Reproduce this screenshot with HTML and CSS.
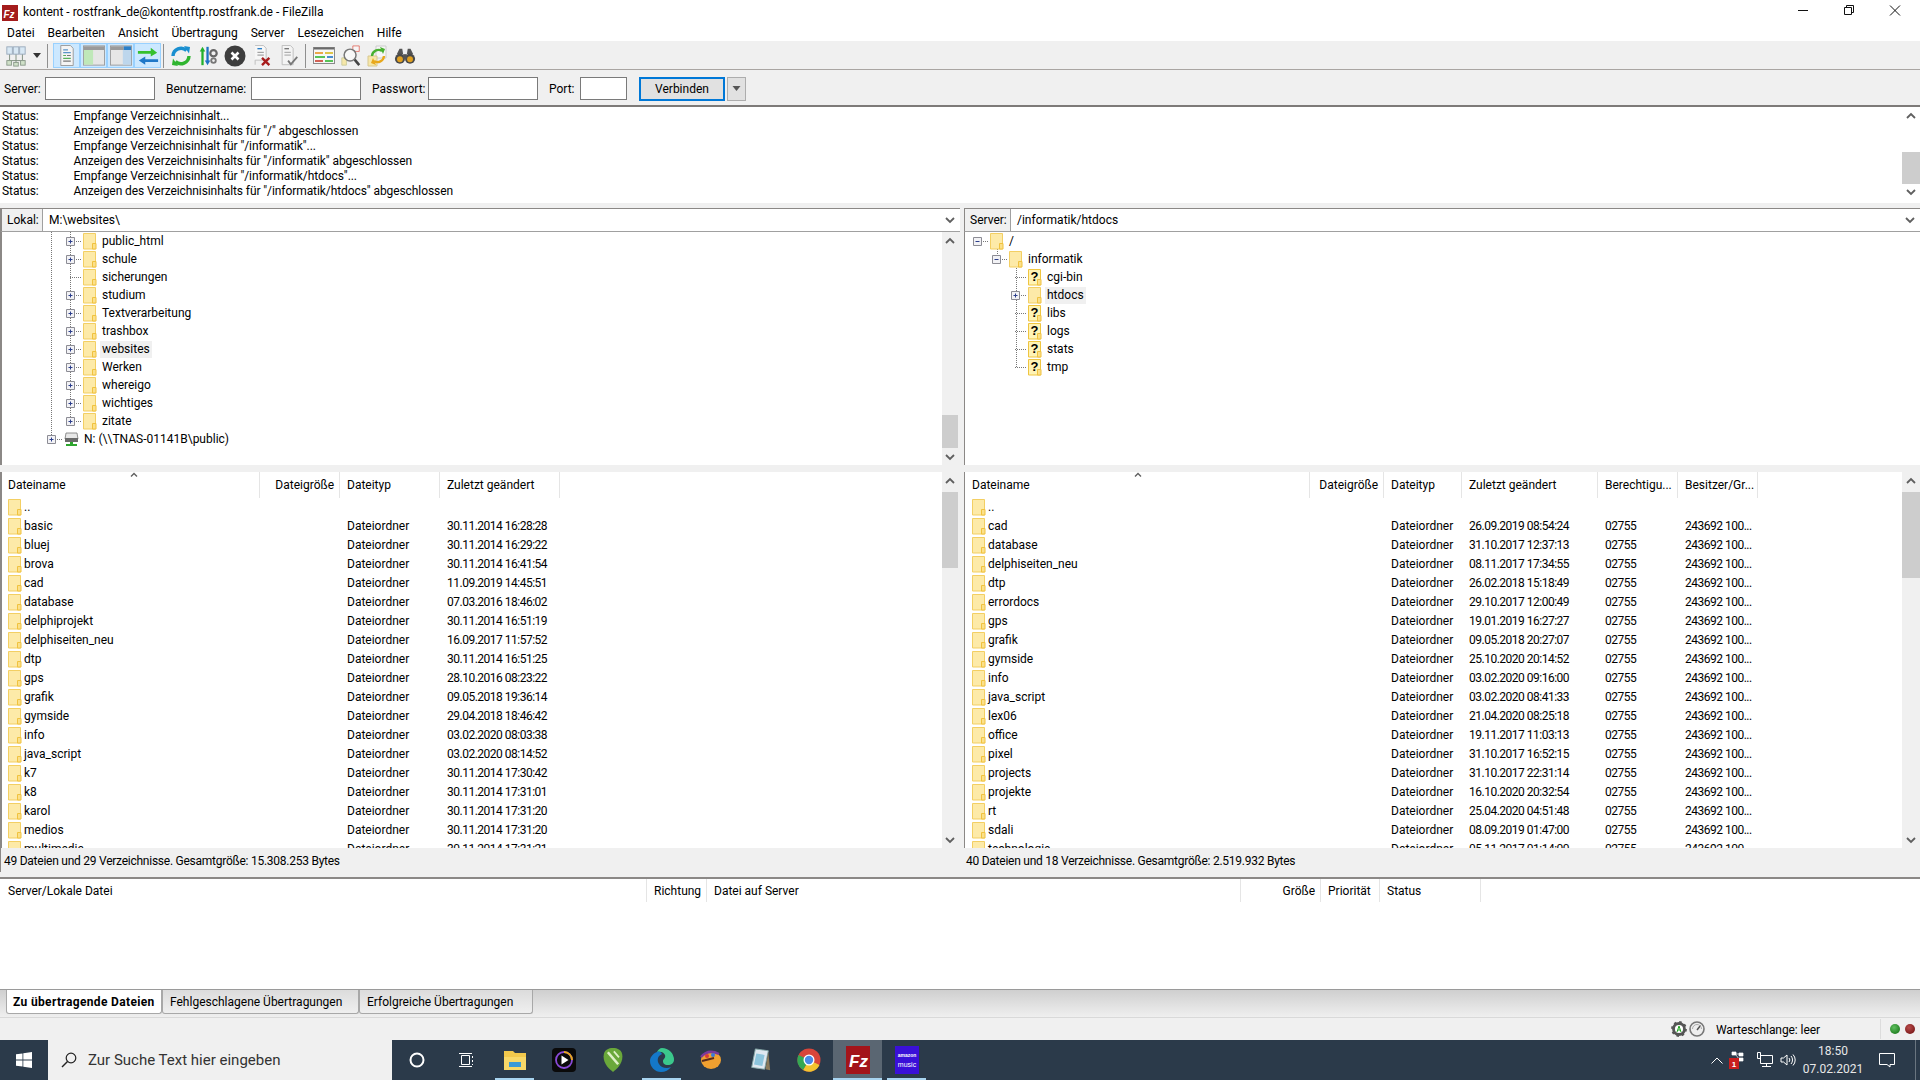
FILE: index.html
```html
<!DOCTYPE html>
<html lang="de">
<head>
<meta charset="utf-8">
<title>FileZilla</title>
<link rel="stylesheet" href="styles.css">
</head>
<body>
<svg class="sprite" width="0" height="0">
  <symbol id="folder" viewBox="0 0 14 17"><path d="M.5.5h12v15.500H.5z" fill="#fdeaa8" stroke="#f3cf63"/><path d="M9.500 16V10.500H13V16z" fill="#fbe08a" stroke="#f0c23f"/></symbol>
  <symbol id="qfolder" viewBox="0 0 14 17"><path d="M.5.5h12v15.500H.5z" fill="#fff3b5" stroke="#efc540"/><path d="M9.500 16V10.500H13V16z" fill="#fbe08a" stroke="#f0c23f"/></symbol>
  <symbol id="exp-plus" viewBox="0 0 17 18"><path d="M.5 5.500h8v8h-8z" fill="#f2f2f5" stroke="#8c8c94"/><path d="M2.500 9.500h4M4.500 7.500v4" stroke="#2c3f8c"/><path d="M10 9.500h6" stroke="#777" stroke-dasharray="1 1"/></symbol>
  <symbol id="exp-minus" viewBox="0 0 17 18"><path d="M.5 5.500h8v8h-8z" fill="#f2f2f5" stroke="#8c8c94"/><path d="M2.500 9.500h4" stroke="#2c3f8c"/><path d="M10 9.500h6" stroke="#777" stroke-dasharray="1 1"/></symbol>
  <symbol id="exp-none" viewBox="0 0 17 18"><path d="M4 9.500h12" stroke="#777" stroke-dasharray="1 1"/></symbol>
  <symbol id="up" viewBox="0 0 10 8"><path d="M1 6l4-4 4 4" fill="none" stroke="#5f5f5f" stroke-width="1.800"/></symbol>
  <symbol id="down" viewBox="0 0 10 8"><path d="M1 2l4 4 4-4" fill="none" stroke="#5f5f5f" stroke-width="1.800"/></symbol>
</svg>

<div class="window">
  <header class="titlebar">
    <div class="title-left">
      <svg class="app-icon" viewBox="0 0 16 16"><rect width="16" height="16" fill="#a41c1c"/><text x="1.500" y="12.500" class="fz-small">Fz</text></svg>
      <span>kontent - rostfrank_de@kontentftp.rostfrank.de - FileZilla</span>
    </div>
    <div class="winbtns">
      <svg class="winbtn" viewBox="0 0 46 20"><path d="M18 10.500h10" stroke="#111"/></svg>
      <svg class="winbtn" viewBox="0 0 46 20"><path d="M18.500 7.500h7v7h-7zM20.500 7.500v-2h7v7h-2" fill="none" stroke="#111"/></svg>
      <svg class="winbtn" viewBox="0 0 46 20"><path d="M18 5.500l10 10M28 5.500l-10 10" stroke="#111"/></svg>
    </div>
  </header>

  <nav class="menubar">
    <span>Datei</span><span>Bearbeiten</span><span>Ansicht</span><span>Übertragung</span><span>Server</span><span>Lesezeichen</span><span>Hilfe</span>
  </nav>

  <div class="toolbar">
    <svg class="tb tb-site" viewBox="0 0 22 24"><path d="M4 9v8M11 9v8M18 9v8M2 17h18M11 17v3" stroke="#7a8a7a" fill="none"/><rect x="1" y="2" width="6" height="8" fill="#d8e8f4" stroke="#9ab"/><rect x="8" y="2" width="6" height="8" fill="#d8e8f4" stroke="#9ab"/><rect x="15" y="2" width="6" height="8" fill="#d8e8f4" stroke="#9ab"/><rect x="1" y="17" width="5" height="5" fill="#cfe0c8" stroke="#8a9a8a"/><rect x="8.500" y="19" width="5" height="4" fill="#cfe0c8" stroke="#8a9a8a"/><rect x="16" y="17" width="5" height="5" fill="#cfe0c8" stroke="#8a9a8a"/></svg>
    <svg class="tb-caret" viewBox="0 0 8 5"><path d="M0 0h8L4 5z" fill="#333"/></svg>
    <i class="tb-sep"></i>
    <div class="tb-group">
      <div class="tb-on"><svg viewBox="0 0 20 22"><path d="M3.500.5h10l3 3v18h-13z" fill="#f4f4f4" stroke="#9a9a9a"/><path d="M6 5h5M6 8h8" stroke="#5a94c8" stroke-width="1.300"/><path d="M6 11h3M6 14h8" stroke="#56b05a" stroke-width="1.300"/><path d="M10 11h4M6 17h8" stroke="#777" stroke-width="1.300"/></svg></div>
      <div class="tb-on"><svg viewBox="0 0 24 22"><rect x=".5" y=".5" width="23" height="21" fill="#e6e6e6" stroke="#9a9a9a"/><rect x="1" y="1" width="22" height="4" fill="#9a9a9a"/><rect x="1" y="5" width="10" height="16" fill="#bfe8b9"/></svg></div>
      <div class="tb-on"><svg viewBox="0 0 24 22"><rect x=".5" y=".5" width="23" height="21" fill="#e6e6e6" stroke="#9a9a9a"/><rect x="1" y="1" width="14" height="4" fill="#9a9a9a"/><rect x="15" y="1" width="8" height="4" fill="#2a7fc8"/><rect x="14" y="5" width="9" height="16" fill="#bdd6ec"/></svg></div>
      <div class="tb-on"><svg viewBox="0 0 24 22"><path d="M1 6h14V2.500L22 8l-7 4V9H1z" fill="#35c02e"/><path d="M23 15H9v-3L2 16.500 9 21v-3h14z" fill="#1f78c8"/></svg></div>
    </div>
    <i class="tb-sep tb-sep-b"></i>
    <svg class="tb" viewBox="0 0 22 22"><path d="M3 11a8 8 0 0 1 13.500-5.500" fill="none" stroke="#1a8fd0" stroke-width="3.400"/><path d="M14 1l6 1-1 6.500z" fill="#1a8fd0"/><path d="M19 11a8 8 0 0 1-13.500 5.500" fill="none" stroke="#2fb52f" stroke-width="3.400"/><path d="M8 21l-6-1 1-6.500z" fill="#2fb52f"/></svg>
    <svg class="tb" viewBox="0 0 22 24"><path d="M5 22V6" stroke="#22b02a" stroke-width="2.500"/><path d="M2 7l3-5 3 5z" fill="#22b02a"/><path d="M10.500 2v16" stroke="#1c72c4" stroke-width="2.500"/><path d="M7.500 17l3 5 3-5z" fill="#1c72c4"/><circle cx="17" cy="9" r="3.500" fill="none" stroke="#666" stroke-width="2.400"/><circle cx="17" cy="17" r="2.500" fill="none" stroke="#777" stroke-width="2"/></svg>
    <svg class="tb" viewBox="0 0 22 22"><circle cx="11" cy="11" r="10.500" fill="#3d3d3d"/><path d="M7.500 7.500l7 7M14.500 7.500l-7 7" stroke="#fff" stroke-width="2.600"/></svg>
    <svg class="tb" viewBox="0 0 22 24"><path d="M3.500.5h9l3 3v13h-12v5" fill="#f7f7f7" stroke="#bbb"/><path d="M6 4h5" stroke="#2a7fc8" stroke-width="1.500"/><path d="M6 8h7M6 11h7" stroke="#888"/><path d="M11 14l8 8M19 14l-8 8" stroke="#a81c1c" stroke-width="2.600"/></svg>
    <svg class="tb" viewBox="0 0 22 24"><path d="M3.500.5h9l3 3v18h-12z" fill="#f4f4f4" stroke="#bbb"/><path d="M6 4h5" stroke="#777" stroke-width="1.500"/><path d="M6 8h7M6 11h7" stroke="#999"/><path d="M10 17l3 4 7-8" fill="none" stroke="#777" stroke-width="2"/></svg>
    <i class="tb-sep tb-sep-c"></i>
    <svg class="tb" viewBox="0 0 22 20"><rect x=".5" y="1.500" width="21" height="16" fill="#f7f7f7" stroke="#8a8a8a"/><path d="M1 2.500h20" stroke="#6a6a6a" stroke-width="2"/><path d="M2 7h8" stroke="#e8921c" stroke-width="1.600"/><path d="M12 7h8" stroke="#d8b81c" stroke-width="1.600"/><path d="M2 11h10" stroke="#2fb52f" stroke-width="1.600"/><path d="M14 11h6" stroke="#1c72c4" stroke-width="1.600"/><path d="M2 15h8" stroke="#c83a2a" stroke-width="1.600"/><path d="M12 15h8" stroke="#2fb52f" stroke-width="1.600"/></svg>
    <svg class="tb" viewBox="0 0 22 24"><path d="M13 1h7v6h-7z" fill="#f6f6f6" stroke="#d43" stroke-width=".7"/><path d="M1 14h5v8H1z" fill="#f6e7a8" stroke="#cc9"/><circle cx="10" cy="11" r="6.500" fill="#f8f8f8" stroke="#777" stroke-width="1.600"/><path d="M15 16l5 6" stroke="#444" stroke-width="2.800"/></svg>
    <svg class="tb" viewBox="0 0 22 22"><path d="M9 1h10v12H9z" fill="#f6f6f6" stroke="#ccc"/><path d="M1 11h9v10H1z" fill="#f6e7a8" stroke="#d8c890"/><path d="M5 11a6.500 6.500 0 0 1 10-5" fill="none" stroke="#48b030" stroke-width="2.400"/><path d="M13 2l5 2-2 5z" fill="#48b030"/><path d="M17 11a6.500 6.500 0 0 1-10 5" fill="none" stroke="#e8a81c" stroke-width="2.400"/><path d="M9 20l-5-2 2-5z" fill="#e8a81c"/></svg>
    <svg class="tb" viewBox="0 0 24 20"><path d="M3 8l3-6h3l1 6zM21 8l-3-6h-3l-1 6z" fill="#555"/><circle cx="6.500" cy="13" r="5.500" fill="#4a4a4a"/><circle cx="17.500" cy="13" r="5.500" fill="#4a4a4a"/><circle cx="6.500" cy="13.500" r="3.200" fill="#e0a020"/><circle cx="17.500" cy="13.500" r="3.200" fill="#e0a020"/><rect x="10" y="8" width="4" height="5" fill="#555"/></svg>
  </div>

  <form class="quick">
    <label class="q-server">Server:</label><span class="field f-wide"></span>
    <label class="q-user">Benutzername:</label><span class="field f-wide"></span>
    <label class="q-pass">Passwort:</label><span class="field f-wide"></span>
    <label class="q-port">Port:</label><span class="field f-port"></span>
    <span class="connect">Verbinden</span>
    <span class="connect-more"><svg viewBox="0 0 8 5"><path d="M0 0h8L4 5z" fill="#555"/></svg></span>
  </form>

  <section class="log">
    <div class="log-body">
      <div class="log-row"><span>Status:</span><span>Empfange Verzeichnisinhalt...</span></div>
      <div class="log-row"><span>Status:</span><span>Anzeigen des Verzeichnisinhalts für "/" abgeschlossen</span></div>
      <div class="log-row"><span>Status:</span><span>Empfange Verzeichnisinhalt für "/informatik"...</span></div>
      <div class="log-row"><span>Status:</span><span>Anzeigen des Verzeichnisinhalts für "/informatik" abgeschlossen</span></div>
      <div class="log-row"><span>Status:</span><span>Empfange Verzeichnisinhalt für "/informatik/htdocs"...</span></div>
      <div class="log-row"><span>Status:</span><span>Anzeigen des Verzeichnisinhalts für "/informatik/htdocs" abgeschlossen</span></div>
    </div>
    <div class="sb sb-r sb-log"><svg class="sb-a"><use href="#up"/></svg><i class="thumb"></i><svg class="sb-a"><use href="#down"/></svg></div>
  </section>

  <div class="split">
    <section class="pane pane-l">
      <div class="pathbar"><span class="path-label">Lokal:</span><span class="path-value">M:\websites\</span><svg class="path-chev"><use href="#down"/></svg></div>
      <div class="tree-wrap">
        <div class="tree">
          <i class="vl vl-a"></i><i class="vl vl-b"></i>
          <div class="node ind-local"><svg class="exp"><use href="#exp-plus"/></svg><svg class="fld"><use href="#folder"/></svg><span class="lbl">public_html</span></div>
          <div class="node ind-local"><svg class="exp"><use href="#exp-plus"/></svg><svg class="fld"><use href="#folder"/></svg><span class="lbl">schule</span></div>
          <div class="node ind-local"><svg class="exp"><use href="#exp-none"/></svg><svg class="fld"><use href="#folder"/></svg><span class="lbl">sicherungen</span></div>
          <div class="node ind-local"><svg class="exp"><use href="#exp-plus"/></svg><svg class="fld"><use href="#folder"/></svg><span class="lbl">studium</span></div>
          <div class="node ind-local"><svg class="exp"><use href="#exp-plus"/></svg><svg class="fld"><use href="#folder"/></svg><span class="lbl">Textverarbeitung</span></div>
          <div class="node ind-local"><svg class="exp"><use href="#exp-plus"/></svg><svg class="fld"><use href="#folder"/></svg><span class="lbl">trashbox</span></div>
          <div class="node ind-local"><svg class="exp"><use href="#exp-plus"/></svg><svg class="fld"><use href="#folder"/></svg><span class="lbl sel">websites</span></div>
          <div class="node ind-local"><svg class="exp"><use href="#exp-plus"/></svg><svg class="fld"><use href="#folder"/></svg><span class="lbl">Werken</span></div>
          <div class="node ind-local"><svg class="exp"><use href="#exp-plus"/></svg><svg class="fld"><use href="#folder"/></svg><span class="lbl">whereigo</span></div>
          <div class="node ind-local"><svg class="exp"><use href="#exp-plus"/></svg><svg class="fld"><use href="#folder"/></svg><span class="lbl">wichtiges</span></div>
          <div class="node ind-local"><svg class="exp"><use href="#exp-plus"/></svg><svg class="fld"><use href="#folder"/></svg><span class="lbl">zitate</span></div>
          <div class="node ind-drive"><svg class="exp"><use href="#exp-plus"/></svg><svg class="drive" viewBox="0 0 15 15"><path d="M2 1h11l1 6H1z" fill="#e8e8e8" stroke="#777" stroke-width=".8"/><rect x="1" y="6" width="13" height="4" fill="#6a6a6a"/><path d="M6 10h3v2H6zM2 12h11v2H2z" fill="#2da52d"/></svg><span class="lbl-drive">N: (\\TNAS-01141B\public)</span></div>
        </div>
        <div class="sb sb-l"><svg class="sb-a"><use href="#up"/></svg><i class="thumb thumb-tree"></i><svg class="sb-a"><use href="#down"/></svg></div>
      </div>
      <div class="pane-gap"></div>
      <div class="list-wrap">
        <div class="list cols-l">
          <svg class="sortmark sort-l"><use href="#up"/></svg>
          <div class="row head"><span>Dateiname</span><span class="r">Dateigröße</span><span>Dateityp</span><span>Zuletzt geändert</span></div>
          <div class="row"><span class="n"><svg class="fld"><use href="#folder"/></svg>..</span><span></span><span></span><span></span></div>
          <div class="row"><span class="n"><svg class="fld"><use href="#folder"/></svg>basic</span><span></span><span>Dateiordner</span><span>30.11.2014 16:28:28</span></div>
          <div class="row"><span class="n"><svg class="fld"><use href="#folder"/></svg>bluej</span><span></span><span>Dateiordner</span><span>30.11.2014 16:29:22</span></div>
          <div class="row"><span class="n"><svg class="fld"><use href="#folder"/></svg>brova</span><span></span><span>Dateiordner</span><span>30.11.2014 16:41:54</span></div>
          <div class="row"><span class="n"><svg class="fld"><use href="#folder"/></svg>cad</span><span></span><span>Dateiordner</span><span>11.09.2019 14:45:51</span></div>
          <div class="row"><span class="n"><svg class="fld"><use href="#folder"/></svg>database</span><span></span><span>Dateiordner</span><span>07.03.2016 18:46:02</span></div>
          <div class="row"><span class="n"><svg class="fld"><use href="#folder"/></svg>delphiprojekt</span><span></span><span>Dateiordner</span><span>30.11.2014 16:51:19</span></div>
          <div class="row"><span class="n"><svg class="fld"><use href="#folder"/></svg>delphiseiten_neu</span><span></span><span>Dateiordner</span><span>16.09.2017 11:57:52</span></div>
          <div class="row"><span class="n"><svg class="fld"><use href="#folder"/></svg>dtp</span><span></span><span>Dateiordner</span><span>30.11.2014 16:51:25</span></div>
          <div class="row"><span class="n"><svg class="fld"><use href="#folder"/></svg>gps</span><span></span><span>Dateiordner</span><span>28.10.2016 08:23:22</span></div>
          <div class="row"><span class="n"><svg class="fld"><use href="#folder"/></svg>grafik</span><span></span><span>Dateiordner</span><span>09.05.2018 19:36:14</span></div>
          <div class="row"><span class="n"><svg class="fld"><use href="#folder"/></svg>gymside</span><span></span><span>Dateiordner</span><span>29.04.2018 18:46:42</span></div>
          <div class="row"><span class="n"><svg class="fld"><use href="#folder"/></svg>info</span><span></span><span>Dateiordner</span><span>03.02.2020 08:03:38</span></div>
          <div class="row"><span class="n"><svg class="fld"><use href="#folder"/></svg>java_script</span><span></span><span>Dateiordner</span><span>03.02.2020 08:14:52</span></div>
          <div class="row"><span class="n"><svg class="fld"><use href="#folder"/></svg>k7</span><span></span><span>Dateiordner</span><span>30.11.2014 17:30:42</span></div>
          <div class="row"><span class="n"><svg class="fld"><use href="#folder"/></svg>k8</span><span></span><span>Dateiordner</span><span>30.11.2014 17:31:01</span></div>
          <div class="row"><span class="n"><svg class="fld"><use href="#folder"/></svg>karol</span><span></span><span>Dateiordner</span><span>30.11.2014 17:31:20</span></div>
          <div class="row"><span class="n"><svg class="fld"><use href="#folder"/></svg>medios</span><span></span><span>Dateiordner</span><span>30.11.2014 17:31:20</span></div>
          <div class="row"><span class="n"><svg class="fld"><use href="#folder"/></svg>multimedia</span><span></span><span>Dateiordner</span><span>30.11.2014 17:31:21</span></div>
        </div>
        <div class="sb sb-l"><svg class="sb-a"><use href="#up"/></svg><i class="thumb thumb-ll"></i><svg class="sb-a"><use href="#down"/></svg></div>
      </div>
      <div class="statusline">49 Dateien und 29 Verzeichnisse. Gesamtgröße: 15.308.253 Bytes</div>
    </section>

    <section class="pane pane-r">
      <div class="pathbar"><span class="path-label">Server:</span><span class="path-value">/informatik/htdocs</span><svg class="path-chev"><use href="#down"/></svg></div>
      <div class="tree-wrap">
        <div class="tree">
          <i class="vl vl-c"></i><i class="vl vl-d"></i>
          <div class="node ind-0"><svg class="exp"><use href="#exp-minus"/></svg><svg class="fld"><use href="#folder"/></svg><span class="lbl">/</span></div>
          <div class="node ind-1"><svg class="exp"><use href="#exp-minus"/></svg><svg class="fld"><use href="#folder"/></svg><span class="lbl">informatik</span></div>
          <div class="node ind-2"><svg class="exp"><use href="#exp-none"/></svg><span class="qf"><svg class="fld"><use href="#qfolder"/></svg><b class="qmark">?</b></span><span class="lbl">cgi-bin</span></div>
          <div class="node ind-2"><svg class="exp"><use href="#exp-plus"/></svg><svg class="fld"><use href="#folder"/></svg><span class="lbl sel">htdocs</span></div>
          <div class="node ind-2"><svg class="exp"><use href="#exp-none"/></svg><span class="qf"><svg class="fld"><use href="#qfolder"/></svg><b class="qmark">?</b></span><span class="lbl">libs</span></div>
          <div class="node ind-2"><svg class="exp"><use href="#exp-none"/></svg><span class="qf"><svg class="fld"><use href="#qfolder"/></svg><b class="qmark">?</b></span><span class="lbl">logs</span></div>
          <div class="node ind-2"><svg class="exp"><use href="#exp-none"/></svg><span class="qf"><svg class="fld"><use href="#qfolder"/></svg><b class="qmark">?</b></span><span class="lbl">stats</span></div>
          <div class="node ind-2"><svg class="exp"><use href="#exp-none"/></svg><span class="qf"><svg class="fld"><use href="#qfolder"/></svg><b class="qmark">?</b></span><span class="lbl">tmp</span></div>
        </div>
      </div>
      <div class="pane-gap"></div>
      <div class="list-wrap">
        <div class="list cols-r">
          <svg class="sortmark sort-r"><use href="#up"/></svg>
          <div class="row head"><span>Dateiname</span><span class="r">Dateigröße</span><span>Dateityp</span><span>Zuletzt geändert</span><span>Berechtigu...</span><span>Besitzer/Gr...</span></div>
          <div class="row"><span class="n"><svg class="fld"><use href="#folder"/></svg>..</span><span></span><span></span><span></span><span></span><span></span></div>
          <div class="row"><span class="n"><svg class="fld"><use href="#folder"/></svg>cad</span><span></span><span>Dateiordner</span><span>26.09.2019 08:54:24</span><span>02755</span><span>243692 100...</span></div>
          <div class="row"><span class="n"><svg class="fld"><use href="#folder"/></svg>database</span><span></span><span>Dateiordner</span><span>31.10.2017 12:37:13</span><span>02755</span><span>243692 100...</span></div>
          <div class="row"><span class="n"><svg class="fld"><use href="#folder"/></svg>delphiseiten_neu</span><span></span><span>Dateiordner</span><span>08.11.2017 17:34:55</span><span>02755</span><span>243692 100...</span></div>
          <div class="row"><span class="n"><svg class="fld"><use href="#folder"/></svg>dtp</span><span></span><span>Dateiordner</span><span>26.02.2018 15:18:49</span><span>02755</span><span>243692 100...</span></div>
          <div class="row"><span class="n"><svg class="fld"><use href="#folder"/></svg>errordocs</span><span></span><span>Dateiordner</span><span>29.10.2017 12:00:49</span><span>02755</span><span>243692 100...</span></div>
          <div class="row"><span class="n"><svg class="fld"><use href="#folder"/></svg>gps</span><span></span><span>Dateiordner</span><span>19.01.2019 16:27:27</span><span>02755</span><span>243692 100...</span></div>
          <div class="row"><span class="n"><svg class="fld"><use href="#folder"/></svg>grafik</span><span></span><span>Dateiordner</span><span>09.05.2018 20:27:07</span><span>02755</span><span>243692 100...</span></div>
          <div class="row"><span class="n"><svg class="fld"><use href="#folder"/></svg>gymside</span><span></span><span>Dateiordner</span><span>25.10.2020 20:14:52</span><span>02755</span><span>243692 100...</span></div>
          <div class="row"><span class="n"><svg class="fld"><use href="#folder"/></svg>info</span><span></span><span>Dateiordner</span><span>03.02.2020 09:16:00</span><span>02755</span><span>243692 100...</span></div>
          <div class="row"><span class="n"><svg class="fld"><use href="#folder"/></svg>java_script</span><span></span><span>Dateiordner</span><span>03.02.2020 08:41:33</span><span>02755</span><span>243692 100...</span></div>
          <div class="row"><span class="n"><svg class="fld"><use href="#folder"/></svg>lex06</span><span></span><span>Dateiordner</span><span>21.04.2020 08:25:18</span><span>02755</span><span>243692 100...</span></div>
          <div class="row"><span class="n"><svg class="fld"><use href="#folder"/></svg>office</span><span></span><span>Dateiordner</span><span>19.11.2017 11:03:13</span><span>02755</span><span>243692 100...</span></div>
          <div class="row"><span class="n"><svg class="fld"><use href="#folder"/></svg>pixel</span><span></span><span>Dateiordner</span><span>31.10.2017 16:52:15</span><span>02755</span><span>243692 100...</span></div>
          <div class="row"><span class="n"><svg class="fld"><use href="#folder"/></svg>projects</span><span></span><span>Dateiordner</span><span>31.10.2017 22:31:14</span><span>02755</span><span>243692 100...</span></div>
          <div class="row"><span class="n"><svg class="fld"><use href="#folder"/></svg>projekte</span><span></span><span>Dateiordner</span><span>16.10.2020 20:32:54</span><span>02755</span><span>243692 100...</span></div>
          <div class="row"><span class="n"><svg class="fld"><use href="#folder"/></svg>rt</span><span></span><span>Dateiordner</span><span>25.04.2020 04:51:48</span><span>02755</span><span>243692 100...</span></div>
          <div class="row"><span class="n"><svg class="fld"><use href="#folder"/></svg>sdali</span><span></span><span>Dateiordner</span><span>08.09.2019 01:47:00</span><span>02755</span><span>243692 100...</span></div>
          <div class="row"><span class="n"><svg class="fld"><use href="#folder"/></svg>technologie</span><span></span><span>Dateiordner</span><span>05.11.2017 01:14:00</span><span>02755</span><span>243692 100...</span></div>
        </div>
        <div class="sb sb-r"><svg class="sb-a"><use href="#up"/></svg><i class="thumb thumb-lr"></i><svg class="sb-a"><use href="#down"/></svg></div>
      </div>
      <div class="statusline">40 Dateien und 18 Verzeichnisse. Gesamtgröße: 2.519.932 Bytes</div>
    </section>
  </div>

  <section class="queue">
    <div class="row head cols-q"><span>Server/Lokale Datei</span><span>Richtung</span><span>Datei auf Server</span><span class="r">Größe</span><span>Priorität</span><span>Status</span></div>
  </section>

  <div class="tabs">
    <span class="tab tab-on">Zu übertragende Dateien</span>
    <span class="tab">Fehlgeschlagene Übertragungen</span>
    <span class="tab">Erfolgreiche Übertragungen</span>
  </div>

  <div class="bottom">
    <svg class="st-ic" viewBox="0 0 16 16"><circle cx="8" cy="8" r="5.500" fill="none" stroke="#555" stroke-width="2.800"/><circle cx="8" cy="8" r="7" fill="none" stroke="#555" stroke-width="1.800" stroke-dasharray="2.500 3"/><circle cx="8" cy="8" r="3.500" fill="#fff"/><path d="M8 5l-2 6M8 5l2 6M7 9h2" fill="none" stroke="#1fa81f"/></svg>
    <svg class="st-ic" viewBox="0 0 16 16"><circle cx="8" cy="8" r="7" fill="#eee" stroke="#777" stroke-width="1.600"/><path d="M8 9l3.500-4.500" stroke="#555" stroke-width="1.500"/><path d="M3.500 8a4.500 4.500 0 0 1 9 0" fill="none" stroke="#aaa"/></svg>
    <span class="q-state">Warteschlange: leer</span>
    <i class="bottom-sep"></i>
    <i class="led led-g"></i>
    <i class="led led-r"></i>
  </div>

  <footer class="taskbar">
    <div class="start"><svg viewBox="0 0 16 16"><path d="M0 2.300l6.500-.9v6.200H0zM7.300 1.300L16 0v7.600H7.300zM0 8.400h6.500v6.200L0 13.700zM7.300 8.400H16V16l-8.700-1.200z" fill="#fff"/></svg></div>
    <div class="search">
      <svg viewBox="0 0 16 16"><circle cx="10" cy="6" r="4.800" fill="none" stroke="#222" stroke-width="1.200"/><path d="M6.500 9.500L1 15" stroke="#222" stroke-width="1.400"/></svg>
      <span>Zur Suche Text hier eingeben</span>
    </div>
    <div class="tslot"><svg class="ti-16" viewBox="0 0 16 16"><circle cx="8" cy="8" r="6.500" fill="none" stroke="#fff" stroke-width="2"/></svg></div>
    <div class="tslot"><svg class="ti-16" viewBox="0 0 16 16"><path d="M3.500 3.500h8v9h-8zM1 1.500h13M1 14.500h13M14.500 4v2M14.500 8v2M14.500 12v1" fill="none" stroke="#fff"/></svg></div>
    <div class="tslot run"><svg class="ti-24" viewBox="0 0 24 22"><path d="M1 2h9l2 2h11v17H1z" fill="#f2c84c"/><rect x="1" y="8" width="22" height="13" fill="#f8d868"/><path d="M6 13h12v5H6z" fill="#3a9ad8"/></svg></div>
    <div class="tslot"><svg class="ti-24" viewBox="0 0 24 24"><rect width="24" height="24" rx="4" fill="#0a0a0a"/><circle cx="12" cy="12" r="8" fill="none" stroke="#8a4ad8" stroke-width="1.800"/><path d="M12 4a8 8 0 0 1 8 8" fill="none" stroke="#e8a81c" stroke-width="1.800"/><path d="M9.500 7.500l7 4.500-7 4.500z" fill="#fff"/></svg></div>
    <div class="tslot"><svg class="ti-24" viewBox="0 0 24 28"><path d="M12 0c5 0 11 2 11 10 0 9-7 15-11 18C8 25 1 19 1 10 1 2 7 0 12 0z" fill="#6aa83a"/><path d="M6 5l12 14" stroke="#dff0c8" stroke-width="3"/><path d="M13 4l6 7" stroke="#dff0c8" stroke-width="2"/></svg></div>
    <div class="tslot run"><svg class="ti-24" viewBox="0 0 24 24"><path d="M12 0a12 12 0 0 1 12 12c0 3-3 5-6 5-4 0-5-2-5-4s3-3 2-6c-1-3-5-4-8-3 1-2 3-4 5-4z" fill="#3bc88c"/><path d="M7 4C2 6 0 10 0 13c0 6 5 11 11 11 4 0 8-2 10-5-4 2-10 1-12-3-2-3-2-8 3-10-1-2-3-3-5-2z" fill="#1478c8"/></svg></div>
    <div class="tslot"><svg class="ti-24" viewBox="0 0 24 24"><ellipse cx="12" cy="12" rx="10" ry="9" fill="#f0a030"/><path d="M2 9c5-6 12-6 18-3" stroke="#7a3a9a" stroke-width="2.500" fill="none"/><circle cx="8" cy="8" r="2" fill="#d83a3a"/><circle cx="14" cy="7" r="2" fill="#3a7ad8"/><path d="M3 13l12-3" stroke="#5a2a1a" stroke-width="2"/></svg></div>
    <div class="tslot"><svg class="ti-24" viewBox="0 0 24 26"><path d="M7 1l14 2-4 20L3 21z" fill="#dfe8f0" stroke="#8aa"/><path d="M8 6l9 1.500-2.500 12L5.500 18z" fill="#8cc4dc"/><path d="M18 23l3-19 2 20z" fill="#8a7a5a"/></svg></div>
    <div class="tslot"><svg class="ti-24" viewBox="0 0 24 24"><circle cx="12" cy="12" r="11.500" fill="#d8453a"/><path d="M12 12L22.500 17A11.500 11.500 0 0 1 6 22z" fill="#f2c430"/><path d="M12 12L6 22A11.500 11.500 0 0 1 1.500 7z" fill="#34a853"/><circle cx="12" cy="12" r="5.500" fill="#fff"/><circle cx="12" cy="12" r="4.200" fill="#4a8ae8"/></svg></div>
    <div class="tslot run active"><svg class="ti-24 ti-tall" viewBox="0 0 24 28"><rect width="24" height="28" fill="#a3141a"/><text x="3" y="21" class="fz-big">Fz</text></svg></div>
    <div class="tslot run"><svg class="ti-24 ti-tall" viewBox="0 0 24 28"><rect width="24" height="28" fill="#3a10d8"/><text x="12" y="11" class="am1">amazon</text><text x="12" y="21" class="am2">music</text></svg></div>
    <div class="tray">
      <svg class="ty-chev" viewBox="0 0 12 7"><path d="M.5 6.500L6 1l5.500 5.500" fill="none" stroke="#fff"/></svg>
      <svg class="ty-badge" viewBox="0 0 16 18"><path d="M3 1h4v3H3zM10 2h4v3h-4zM10 7h4v3h-4zM7 3h3M7 4l3 4" stroke="#fff" fill="#fff" stroke-width=".7"/><rect y="7" width="10" height="11" fill="#c81e1e"/><text x="5" y="16" class="one">1</text></svg>
      <svg class="ty-net" viewBox="0 0 16 16"><path d="M3.500 3.500h12v8h-12zM9.500 11.500v3M5 14.500h9M.5.500h3v6h-3z" fill="#2b3a4a" stroke="#fff"/></svg>
      <svg class="ty-vol" viewBox="0 0 16 16"><path d="M1 6h2.500L7 3v10L3.500 10H1zM9 6a3 3 0 0 1 0 4M11 4a6 6 0 0 1 0 8M13 2.500a8 8 0 0 1 0 11" fill="none" stroke="#fff"/></svg>
      <div class="clock"><span>18:50</span><span>07.02.2021</span></div>
      <svg class="ty-note" viewBox="0 0 16 16"><path d="M.5 1.500h15v11H11v2.500l-3-2.500H.5z" fill="none" stroke="#fff"/></svg>
      <i class="ty-show"></i>
    </div>
  </footer>
</div>
</body>
</html>
```
FILE: styles.css
```css
* { box-sizing: border-box; }
html, body { margin: 0; padding: 0; height: 100%; overflow: hidden; }
body { font: 12px/15px Roboto, "Liberation Sans", sans-serif; color: #000; background: #f0f0f0; }
.sprite { position: absolute; }
i { display: block; font-style: normal; }

.window { width: 1920px; height: 1080px; display: flex; flex-direction: column; overflow: hidden; }

.titlebar { height: 22px; background: #fff; display: flex; justify-content: space-between; flex: none; }
.title-left { display: flex; align-items: center; padding-left: 2px; gap: 5px; padding-top: 3px; }
.app-icon { width: 16px; height: 16px; flex: none; }
.fz-small { font: italic 700 10px "Liberation Sans", sans-serif; fill: #fff; }
.winbtns { display: flex; padding-right: 2px; }
.winbtn { width: 46px; height: 20px; }

.menubar { height: 19px; background: #fff; display: flex; align-items: center; padding: 4px 0 0 7px; gap: 13px; flex: none; }

.toolbar { height: 29px; background: #f0f0f0; border-bottom: 1px solid #a9a5a2; display: flex; align-items: center; padding: 1px 0 0 5px; flex: none; }
.tb { width: 22px; height: 22px; margin-right: 5px; flex: none; }
.tb-site { margin-right: 6px; }
.tb-caret { width: 8px; height: 5px; margin-right: 6px; }
.tb-sep { width: 1px; height: 24px; background: #8f8f8f; margin-right: 5px; }
.tb-sep-b { margin: 0 6px 0 2px; }
.tb-sep-c { margin: 0 7px 0 0; }
.tb-group { display: flex; }
.tb-on { width: 27px; height: 25px; background: #cce8ff; border: 1px solid #99d1ff; display: flex; align-items: center; justify-content: center; }
.tb-on svg { width: 22px; height: 21px; }

.quick { height: 37px; background: #f0f0f0; border-bottom: 2px solid #7d7a78; display: flex; align-items: center; padding: 2px 0 0 4px; flex: none; }
.quick label { padding-top: 1px; }
.field { height: 23px; background: #fff; border: 1px solid #7a7a7a; display: block; }
.f-wide { width: 110px; }
.f-port { width: 47px; margin-right: 12px; }
.q-server { width: 41px; }
.q-user { width: 85px; margin-left: 11px; }
.q-pass { width: 56px; margin-left: 11px; }
.q-port { width: 31px; margin-left: 11px; }
.connect { width: 86px; height: 24px; border: 2px solid #0078d7; background: #e1e1e1; text-align: center; line-height: 20px; }
.connect-more { width: 19px; height: 24px; margin-left: 2px; border: 1px solid #adadad; background: #e1e1e1; display: flex; align-items: center; justify-content: center; }
.connect-more svg { width: 9px; height: 5px; }

.log { height: 96px; background: #fff; display: flex; flex: none; }
.log-body { flex: 1; padding: 2px 0 0 2px; letter-spacing: -0.08px; }
.log-row { height: 15px; display: flex; white-space: nowrap; }
.log-row span:first-child { width: 71.500px; }

.sb { background: #f0f0f0; display: flex; flex-direction: column; align-items: center; flex: none; }
.sb-l { width: 16px; }
.sb-r { width: 18px; }
.sb-log { background: #fff; }
.sb-a { width: 10px; height: 8px; flex: none; margin: 5px 0 4px; }
.sb-a:last-child { margin: auto 0 4px; }
.sb-log .sb-a:last-child { margin-bottom: 7px; }
.thumb { width: 100%; background: #cdcdcd; }
.sb-log .thumb { height: 32px; margin-top: 28px; }
.thumb-tree { height: 33px; margin-top: 166px; }
.thumb-ll { height: 76px; margin-top: 3px; }
.thumb-lr { height: 86px; margin-top: 3px; }

.split { display: flex; padding-top: 5px; height: 674px; flex: none; }
.pane { display: flex; flex-direction: column; }
.pane-l { width: 958px; }
.pane-r { width: 956px; margin-left: 6px; flex: 1; }

.pathbar { height: 24px; background: #fff; border-top: 1px solid #8b8886; border-bottom: 1px solid #a0a0a0; border-left: 2px solid #8b8886; display: flex; align-items: center; position: relative; flex: none; }
.pane-r .pathbar { border-left-width: 1px; }
.pane-l .pathbar { margin-right: -2px; }
.path-label { width: 41px; height: 100%; background: #f0f0f0; border-right: 1px solid #a0a0a0; padding-left: 5px; line-height: 22px; flex: none; }
.pane-r .path-label { width: 46px; padding-left: 5px; }
.path-value { padding-left: 6px; flex: 1; }
.path-chev { width: 10px; height: 8px; margin-right: 5px; }

.tree-wrap { height: 233px; background: #fff; border-left: 2px solid #8b8886; display: flex; flex: none; }
.pane-r .tree-wrap { border-left-width: 1px; }
.tree { flex: 1; position: relative; overflow: hidden; }
.node { height: 18px; display: flex; align-items: center; position: relative; white-space: nowrap; }
.ind-local { padding-left: 64px; }
.ind-drive { padding-left: 45px; }
.ind-0 { padding-left: 8px; }
.ind-1 { padding-left: 27px; }
.ind-2 { padding-left: 46px; }
.exp { width: 17px; height: 18px; flex: none; }
.fld { width: 14px; height: 17px; flex: none; }
.qf { position: relative; width: 14px; height: 17px; flex: none; display: block; }
.qmark { position: absolute; left: 0; top: 1px; width: 13px; text-align: center; font: 900 13px/14px "Liberation Sans", sans-serif; }
.drive { width: 15px; height: 15px; flex: none; }
.lbl { margin-left: 3px; padding: 0 2px; line-height: 17px; }
.lbl-drive { margin-left: 5px; }
.sel { background: #f0f0f0; }
.vl { position: absolute; width: 1px; border-left: 1px dotted #777; }
.vl-a { left: 49px; top: 0; height: 207px; }
.vl-b { left: 68px; top: 0; height: 189px; }
.vl-c { left: 32px; top: 14px; height: 14px; }
.vl-d { left: 51px; top: 33px; height: 102px; }

.pane-gap { height: 7px; background: #f0f0f0; flex: none; }

.list-wrap { height: 376px; background: #fff; border-left: 2px solid #8b8886; display: flex; overflow: hidden; flex: none; position: relative; }
.pane-r .list-wrap { border-left-width: 1px; }
.list { flex: 1; overflow: hidden; }
.row { display: grid; height: 19px; line-height: 19px; white-space: nowrap; }
.cols-l .row { grid-template-columns: 258px 80px 100px 120px; }
.cols-r .row { grid-template-columns: 345px 74px 78px 136px 80px 80px; }
.cols-q { grid-template-columns: 647px 60px 534px 80px 59px 101px; }
.row > span { padding-left: 7px; overflow: hidden; }
.cols-l .row > span:first-child { padding-left: 6px; }
.list .row:not(.head) > span:nth-child(n+4) { letter-spacing: -0.5px; }
.row .r { text-align: right; padding: 0 5px 0 0; }
.row .n { display: flex; align-items: center; gap: 2px; }
.head { height: 26px; line-height: 27px; }
.head > span { border-right: 1px solid #e5e5e5; }
.sortmark { position: absolute; top: 0; width: 10px; height: 6px; }
.sort-l { left: 127px; }
.sort-r { left: 168px; }

.statusline { height: 24px; background: #f0f0f0; padding-left: 3px; line-height: 26px; letter-spacing: -0.25px; flex: none; }
.pane-l .statusline { border-left: 1px solid #8b8886; }
.pane-r .statusline { padding-left: 2px; }

.queue { height: 112px; background: #fff; border-top: 2px solid #8b8886; flex: none; }
.queue .head { height: 23px; line-height: 25px; }
.queue .head > span:first-child { padding-left: 8px; }

.tabs { height: 29px; background: linear-gradient(#cfcfcf, #efefef); border-top: 1px solid #9a9a9a; border-bottom: 1px solid #d9d9d9; display: flex; padding-left: 6px; align-items: flex-start; flex: none; }
.tab { height: 24px; line-height: 24px; padding: 0 10px 0 7px; border: 1px solid #a8a8a8; border-top: 0; border-radius: 0 0 3px 3px; background: linear-gradient(#dcdcdc, #efefef); white-space: nowrap; flex: none; }
.tab:nth-child(2) { width: 197px; }
.tab:nth-child(3) { width: 174px; }
.tab-on { width: 156px; background: #fff; font-weight: 700; letter-spacing: 0.35px; padding: 0 0 0 6px; }

.bottom { height: 22px; background: #f0f0f0; display: flex; align-items: center; padding-left: 1671px; flex: none; }
.st-ic { width: 16px; height: 16px; margin-right: 2px; flex: none; }
.q-state { margin-left: 9px; width: 164px; white-space: nowrap; padding-top: 2px; letter-spacing: -0.08px; }
.bottom-sep { width: 1px; height: 20px; background: #dcdcdc; margin-right: 9px; }
.led { width: 10px; height: 10px; border-radius: 50%; margin-right: 5px; flex: none; }
.led-g { background: radial-gradient(circle at 40% 35%, #5fbf5f, #0c6a0c); }
.led-r { background: radial-gradient(circle at 40% 35%, #b84a4a, #6a0c0c); }

.taskbar { height: 40px; background: #2b3a4a; display: flex; color: #fff; flex: none; }
.start { width: 48px; display: flex; align-items: center; justify-content: center; flex: none; }
.start svg { width: 16px; height: 16px; }
.search { width: 344px; background: #f0f0f0; color: #333; display: flex; align-items: center; font-size: 15px; padding-left: 13px; gap: 11px; flex: none; }
.search svg { width: 16px; height: 16px; }
.tslot { width: 49px; display: flex; align-items: center; justify-content: center; position: relative; flex: none; }
.tslot.run::after { content: ""; position: absolute; left: 5px; right: 5px; bottom: 0; height: 2px; background: #a8d4f0; }
.tslot.active { background: #5a6672; }
.tslot.active::after { left: 0; right: 0; }
.ti-16 { width: 16px; height: 16px; }
.ti-24 { width: 24px; height: 24px; }
.ti-tall { height: 28px; }
.fz-big { font: italic 700 17px "Liberation Sans", sans-serif; fill: #fff; }
.am1 { font: 700 5px "Liberation Sans", sans-serif; fill: #fff; text-anchor: middle; }
.am2 { font: 400 7px "Liberation Sans", sans-serif; fill: #fff; text-anchor: middle; }
.tray { flex: 1; display: flex; align-items: center; padding-left: 780px; }
.ty-chev { width: 12px; height: 7px; margin-right: 6px; flex: none; }
.ty-badge { width: 16px; height: 18px; margin-right: 12px; flex: none; }
.ty-net { width: 16px; height: 16px; margin-right: 7px; flex: none; }
.ty-vol { width: 16px; height: 16px; margin-right: 1px; flex: none; }
.clock { width: 72px; display: flex; flex-direction: column; align-items: center; line-height: 18px; color: #e8e8e8; flex: none; }
.ty-note { width: 16px; height: 16px; margin-left: 10px; flex: none; }
.ty-show { width: 1px; height: 100%; background: #6a7580; margin-left: 20px; flex: none; }
.one { font: 700 8px "Liberation Sans", sans-serif; fill: #fff; text-anchor: middle; }
```
